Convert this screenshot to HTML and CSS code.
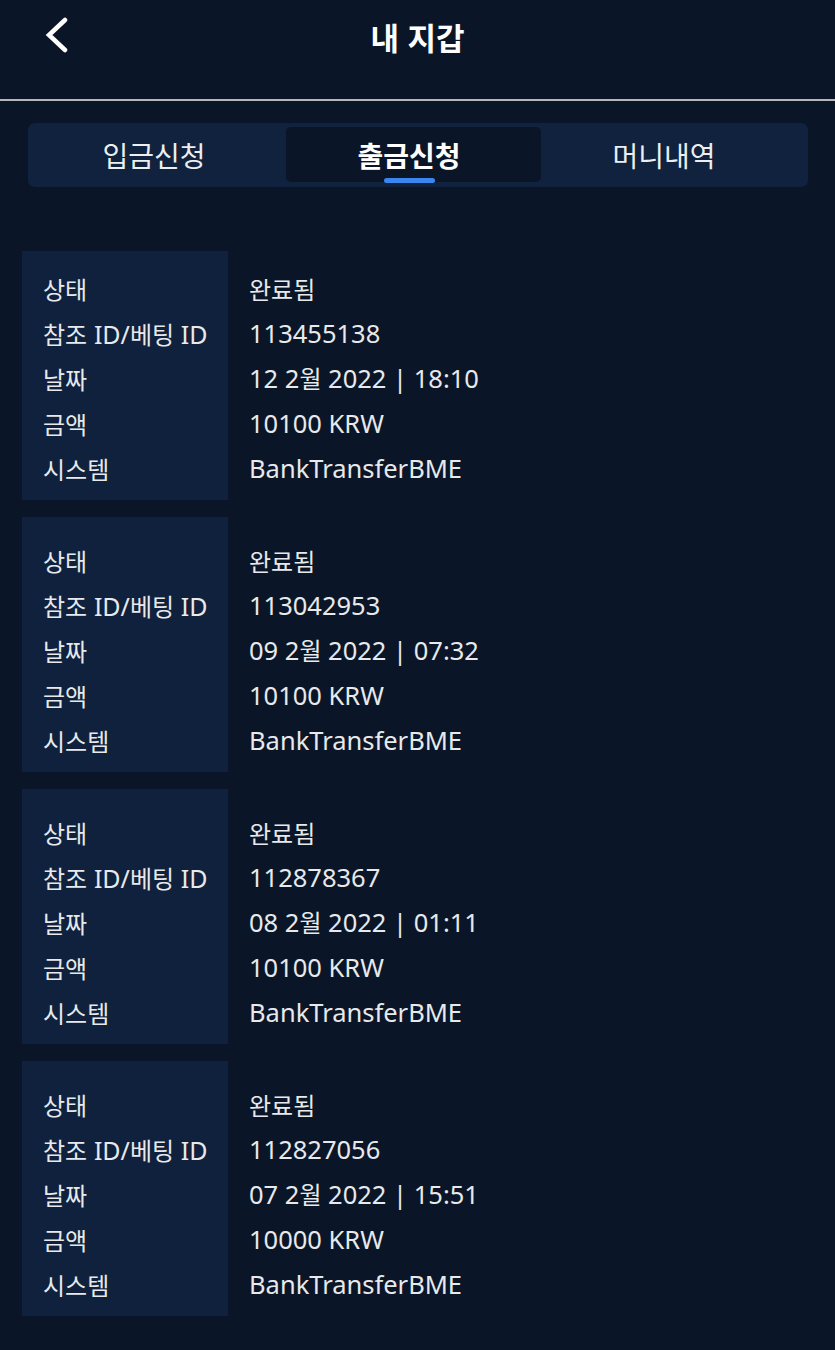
FILE: index.html
```html
<!DOCTYPE html>
<html lang="ko">
<head>
  <meta charset="UTF-8">
  <meta name="viewport" content="width=device-width, initial-scale=1.0">
  <title>내 지갑</title>
  <link rel="stylesheet" href="styles.css">
</head>
<body>
  <header class="topbar">
    <a class="back" href="#" aria-label="뒤로">
      <svg width="28" height="36" viewBox="0 0 28 36"><path d="M23 3 L7 18 L23 33" fill="none" stroke="#fff" stroke-width="4.5" stroke-linecap="round"/></svg>
    </a>
    <h1>내 지갑</h1>
  </header>

  <nav class="tabs">
    <a href="#" class="tab">입금신청</a>
    <a href="#" class="tab active">출금신청</a>
    <a href="#" class="tab">머니내역</a>
  </nav>

  <main class="list">
    <div class="card">
      <div class="labels">
        <div>상태</div>
        <div>참조 <span class="latin">ID/</span>베팅 <span class="latin">ID</span></div>
        <div>날짜</div>
        <div>금액</div>
        <div>시스템</div>
      </div>
      <div class="values">
        <div class="ko">완료됨</div>
        <div>113455138</div>
        <div>12 2<span class="ko">월</span> 2022 | 18:10</div>
        <div>10100 KRW</div>
        <div>BankTransferBME</div>
      </div>
    </div>

    <div class="card">
      <div class="labels">
        <div>상태</div>
        <div>참조 <span class="latin">ID/</span>베팅 <span class="latin">ID</span></div>
        <div>날짜</div>
        <div>금액</div>
        <div>시스템</div>
      </div>
      <div class="values">
        <div class="ko">완료됨</div>
        <div>113042953</div>
        <div>09 2<span class="ko">월</span> 2022 | 07:32</div>
        <div>10100 KRW</div>
        <div>BankTransferBME</div>
      </div>
    </div>

    <div class="card">
      <div class="labels">
        <div>상태</div>
        <div>참조 <span class="latin">ID/</span>베팅 <span class="latin">ID</span></div>
        <div>날짜</div>
        <div>금액</div>
        <div>시스템</div>
      </div>
      <div class="values">
        <div class="ko">완료됨</div>
        <div>112878367</div>
        <div>08 2<span class="ko">월</span> 2022 | 01:11</div>
        <div>10100 KRW</div>
        <div>BankTransferBME</div>
      </div>
    </div>

    <div class="card">
      <div class="labels">
        <div>상태</div>
        <div>참조 <span class="latin">ID/</span>베팅 <span class="latin">ID</span></div>
        <div>날짜</div>
        <div>금액</div>
        <div>시스템</div>
      </div>
      <div class="values">
        <div class="ko">완료됨</div>
        <div>112827056</div>
        <div>07 2<span class="ko">월</span> 2022 | 15:51</div>
        <div>10000 KRW</div>
        <div>BankTransferBME</div>
      </div>
    </div>
  </main>
</body>
</html>
```

FILE: styles.css
```css
html, body {
  margin: 0;
  padding: 0;
  min-height: 100%;
  background-color: #0a1628;
  color: #e8e9eb;
  font-family: "Noto Sans", "Noto Sans CJK KR", sans-serif;
}

.topbar {
  position: relative;
  height: 99px;
  border-bottom: 2px solid #b4b6b9;
  display: flex;
  justify-content: center;
}

.topbar h1 {
  margin: 0;
  padding-top: 13px;
  font-family: "Noto Sans CJK KR", sans-serif;
  font-size: 31px;
  font-weight: 700;
  color: #fff;
  line-height: 48px;
}

.back {
  position: absolute;
  left: 42px;
  top: 17px;
  display: flex;
}

.tabs {
  display: flex;
  margin: 22px 27px 0 28px;
  padding: 4px 12px 5px 3px;
  background-color: #10223d;
  border-radius: 7px;
  height: 55px;
}

.tab {
  position: relative;
  flex: 1;
  display: flex;
  justify-content: center;
  align-items: center;
  padding-right: 9px;
  text-decoration: none;
  color: #eceef0;
  font-family: "Noto Sans CJK KR", sans-serif;
  font-size: 28px;
  border-radius: 5px;
}

.tab.active {
  background-color: #0a1628;
  font-weight: 700;
  color: #fff;
}

.tab.active::after {
  content: "";
  position: absolute;
  bottom: -1px;
  left: 50%;
  width: 51px;
  height: 5px;
  margin-left: -30px;
  border-radius: 3px;
  background-color: #3a86ee;
}

.list {
  display: flex;
  flex-direction: column;
  gap: 17px;
  padding: 64px 22px 30px;
}

.card {
  display: flex;
  line-height: 45px;
}

.labels,
.values {
  padding: 21px 0 9px 21px;
}

.card:first-child .labels,
.card:first-child .values {
  padding-top: 15px;
}

.labels {
  width: 185px;
  background-color: #0f213c;
  font-family: "Noto Sans CJK KR", sans-serif;
  font-size: 24px;
}

.values {
  font-size: 25.5px;
}

.latin {
  font-family: "Noto Sans", sans-serif;
  font-size: 25px;
  line-height: 1;
}

.ko {
  font-family: "Noto Sans CJK KR", sans-serif;
  font-size: 24px;
}

.values div .ko {
  line-height: 1;
}
```
